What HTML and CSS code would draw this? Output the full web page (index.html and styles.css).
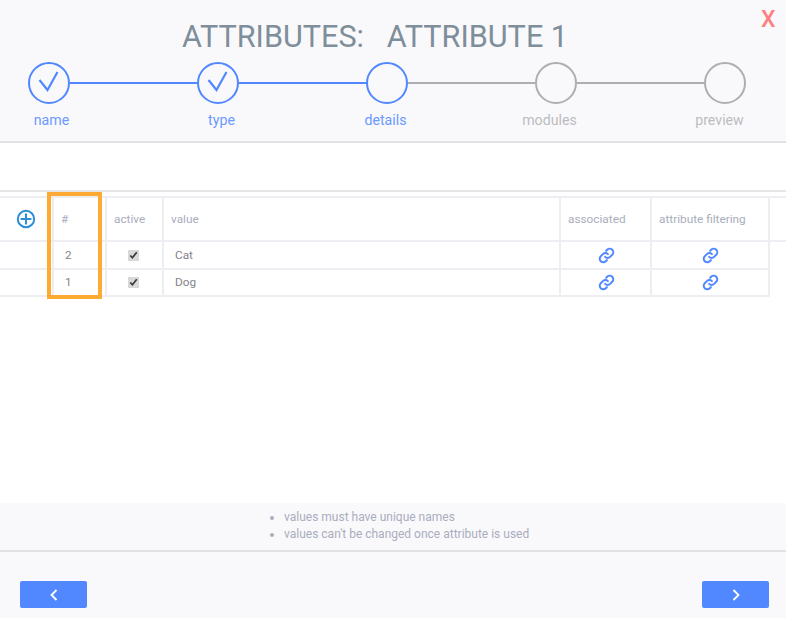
FILE: index.html
```html
<!DOCTYPE html>
<html lang="en">
<head>
<meta charset="utf-8">
<title>Attributes</title>
<link rel="stylesheet" href="styles.css">
</head>
<body>
<div class="page">
  <header class="head">
    <span class="close">X</span>
    <h1 class="title">ATTRIBUTES: &nbsp; ATTRIBUTE 1</h1>
    <div class="track">
      <span class="dot on"><svg viewBox="0 0 37 37" class="tick"><path d="M9.5 16 L17.5 26 L27.5 8"/></svg></span>
      <span class="line on"></span>
      <span class="dot on"><svg viewBox="0 0 37 37" class="tick"><path d="M9.5 16 L17.5 26 L27.5 8"/></svg></span>
      <span class="line on"></span>
      <span class="dot on"></span>
      <span class="line"></span>
      <span class="dot"></span>
      <span class="line"></span>
      <span class="dot"></span>
    </div>
    <div class="labels">
      <span class="lab on">name</span>
      <span class="lab on">type</span>
      <span class="lab on">details</span>
      <span class="lab">modules</span>
      <span class="lab">preview</span>
    </div>
  </header>
  <div class="blank"></div>
  <main class="body">
    <div class="highlight"></div>
    <div class="thead">
      <div class="cell add">
        <svg viewBox="0 0 20 20" class="plus"><circle cx="10" cy="10" r="8.2"/><path d="M10 4.6V15.4M4.6 10H15.4"/></svg>
      </div>
      <div class="cell th">#</div>
      <div class="cell th">active</div>
      <div class="cell th">value</div>
      <div class="cell th">associated</div>
      <div class="cell th">attribute filtering</div>
      <div class="cell th end"></div>
    </div>
    <div class="row">
      <div class="cell first"></div>
      <div class="cell num">2</div>
      <div class="cell mid"><input type="checkbox" class="chk" checked></div>
      <div class="cell val">Cat</div>
      <div class="cell mid"><svg viewBox="0 0 24 24" class="link"><path d="M10 14a5 5 0 0 0 7.1 0l3-3a5 5 0 0 0-7.1-7.1l-1.5 1.5"/><path d="M14 10a5 5 0 0 0-7.1 0l-3 3a5 5 0 0 0 7.1 7.1l1.5-1.5"/></svg></div>
      <div class="cell mid"><svg viewBox="0 0 24 24" class="link"><path d="M10 14a5 5 0 0 0 7.1 0l3-3a5 5 0 0 0-7.1-7.1l-1.5 1.5"/><path d="M14 10a5 5 0 0 0-7.1 0l-3 3a5 5 0 0 0 7.1 7.1l1.5-1.5"/></svg></div>
    </div>
    <div class="row">
      <div class="cell first"></div>
      <div class="cell num">1</div>
      <div class="cell mid"><input type="checkbox" class="chk" checked></div>
      <div class="cell val">Dog</div>
      <div class="cell mid"><svg viewBox="0 0 24 24" class="link"><path d="M10 14a5 5 0 0 0 7.1 0l3-3a5 5 0 0 0-7.1-7.1l-1.5 1.5"/><path d="M14 10a5 5 0 0 0-7.1 0l-3 3a5 5 0 0 0 7.1 7.1l1.5-1.5"/></svg></div>
      <div class="cell mid"><svg viewBox="0 0 24 24" class="link"><path d="M10 14a5 5 0 0 0 7.1 0l3-3a5 5 0 0 0-7.1-7.1l-1.5 1.5"/><path d="M14 10a5 5 0 0 0-7.1 0l-3 3a5 5 0 0 0 7.1 7.1l1.5-1.5"/></svg></div>
    </div>
  </main>
  <section class="notes">
    <ul class="list">
      <li>values must have unique names</li>
      <li>values can't be changed once attribute is used</li>
    </ul>
  </section>
  <footer class="foot">
    <button class="nav" type="button"><svg viewBox="0 0 12 16" class="arrow"><path d="M8.5 3 L3.5 8 L8.5 13"/></svg></button>
    <button class="nav" type="button"><svg viewBox="0 0 12 16" class="arrow"><path d="M3.5 3 L8.5 8 L3.5 13"/></svg></button>
  </footer>
</div>
</body>
</html>
```

FILE: styles.css
```css
* { box-sizing: border-box; }
html, body { margin: 0; padding: 0; }
body {
  width: 786px;
  height: 618px;
  overflow: hidden;
  background: #fff;
  font-family: Roboto, "Liberation Sans", sans-serif;
}
.page { display: flex; flex-direction: column; height: 618px; }

.head {
  position: relative;
  height: 143px;
  flex: none;
  background: #f9f9fc;
  border-bottom: 2px solid #e2e2e4;
  padding-top: 19px;
}
.close {
  position: absolute;
  top: 6px;
  left: 761px;
  font-size: 23px;
  line-height: 27px;
  font-weight: 500;
  color: #ff8080;
}
.title {
  margin: 0;
  height: 43px;
  padding-right: 36px;
  text-align: center;
  font-size: 30.6px;
  line-height: 36px;
  font-weight: 400;
  color: #7e8e9a;
}
.track {
  display: flex;
  align-items: center;
  height: 42px;
  padding-left: 27.5px;
}
.dot {
  width: 42px;
  height: 42px;
  flex: none;
  border: 2.5px solid #aeaeb2;
  border-radius: 50%;
}
.dot.on { border-color: #5288ff; }
.tick { display: block; width: 37px; height: 37px; fill: none; stroke: #5288ff; stroke-width: 2.2; }
.line { width: 127px; height: 2.5px; flex: none; background: #aeaeb2; }
.line.on { background: #5288ff; }
.labels {
  display: grid;
  grid-template-columns: 103px 237px 91px 237px 103px;
  margin-top: 8px;
}
.lab { text-align: center; font-size: 14.2px; line-height: 17px; color: #bcbcc0; }
.lab.on { color: #6c9aff; }

.blank {
  height: 49px;
  flex: none;
  border-bottom: 2px solid #e6e6e9;
}
.body { position: relative; flex: 1; padding-top: 4px; }
.highlight {
  position: absolute;
  left: 47px;
  top: 0;
  width: 55px;
  height: 107px;
  border: 4px solid #ffab33;
}
.thead, .row {
  display: grid;
  grid-template-columns: 52px 53px 57px 397px 91px 120px;
}
.thead {
  grid-template-columns: 52px 53px 57px 397px 91px 118px 18px;
  height: 46px;
  border-top: 2px solid #eeeef2;
  border-bottom: 2px solid #eeeef2;
}
.row { width: 770px; height: 27.5px; border-bottom: 2px solid #eeeef2; }
.cell { border-left: 2px solid #eeeef2; display: flex; align-items: center; font-size: 11.8px; }
.add, .first { border-left: 0; }
.add { justify-content: flex-end; padding-right: 16px; }
.plus { width: 20px; height: 20px; fill: none; stroke: #2a8fd6; stroke-width: 2; }
.th { padding-left: 7px; color: #a9adbd; }
.end { padding: 0; }
.row .cell:last-child { border-right: 2px solid #eeeef2; }
.num { padding-left: 11px; color: #85858a; }
.mid { justify-content: center; }
.val { padding-left: 11px; color: #85858a; }
.chk { width: 11px; height: 11px; margin: 1px 2px 0 0; accent-color: #d9d9d9; }
.link { width: 17px; height: 17px; margin: 1px 0 0 1px; fill: none; stroke: #5288ff; stroke-width: 2.8; stroke-linecap: round; }

.notes {
  height: 49px;
  flex: none;
  background: #f9f9fc;
  border-bottom: 2px solid #e2e2e4;
  padding-top: 6px;
}
.list {
  margin: 0;
  padding-left: 284px;
  font-size: 12px;
  line-height: 17px;
  color: #a9adbd;
}
.foot {
  height: 66px;
  flex: none;
  display: flex;
  justify-content: space-between;
  background: #f9f9fc;
  padding: 29px 17px 0 20px;
}
.nav {
  width: 67px;
  height: 27px;
  display: flex;
  align-items: center;
  justify-content: center;
  padding: 0;
  border: 0;
  border-radius: 2px;
  background: #5288ff;
}
.arrow { width: 12px; height: 16px; fill: none; stroke: #fff; stroke-width: 1.8; }
```
